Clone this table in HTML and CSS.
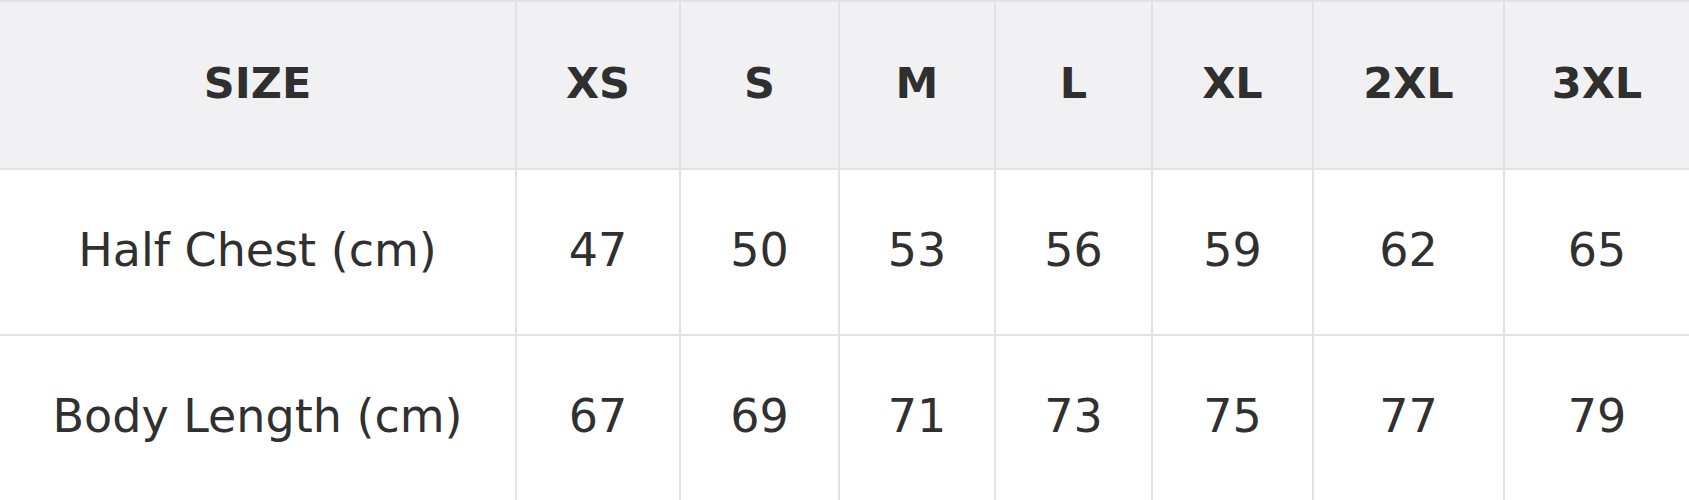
FILE: index.html
```html
<!DOCTYPE html>
<html lang="en">
<head>
<meta charset="utf-8">
<title>Size chart</title>
<link rel="stylesheet" href="styles.css">
</head>
<body>
<table class="size-chart">
  <colgroup>
    <col class="col-label">
    <col class="col-xs">
    <col class="col-s">
    <col class="col-m">
    <col class="col-l">
    <col class="col-xl">
    <col class="col-2xl">
    <col class="col-3xl">
  </colgroup>
  <thead>
    <tr class="head-row">
      <th>SIZE</th>
      <th>XS</th>
      <th>S</th>
      <th>M</th>
      <th>L</th>
      <th>XL</th>
      <th>2XL</th>
      <th>3XL</th>
    </tr>
  </thead>
  <tbody>
    <tr class="row-1">
      <td>Half Chest (cm)</td>
      <td>47</td>
      <td>50</td>
      <td>53</td>
      <td>56</td>
      <td>59</td>
      <td>62</td>
      <td>65</td>
    </tr>
    <tr class="row-2">
      <td>Body Length (cm)</td>
      <td>67</td>
      <td>69</td>
      <td>71</td>
      <td>73</td>
      <td>75</td>
      <td>77</td>
      <td>79</td>
    </tr>
  </tbody>
</table>
</body>
</html>
```
FILE: styles.css
```css
html, body {
  margin: 0;
  padding: 0;
  background: #ffffff;
}

.size-chart {
  width: 1689px;
  table-layout: fixed;
  border-collapse: collapse;
  font-family: "DejaVu Sans", "Liberation Sans", sans-serif;
  font-size: 46px;
  color: #303030;
  border-top: 2px solid #e2e2e2;
}

.col-label { width: 516px; }
.col-xs { width: 164px; }
.col-s { width: 159px; }
.col-m { width: 156px; }
.col-l { width: 157px; }
.col-xl { width: 161px; }
.col-2xl { width: 191px; }
.col-3xl { width: 185px; }

.size-chart th,
.size-chart td {
  padding: 0 0 4px 0;
  text-align: center;
  vertical-align: middle;
  border-left: 2px solid #e2e2e2;
  border-bottom: 2px solid #e2e2e2;
  line-height: 1;
}

.size-chart th:first-child,
.size-chart td:first-child {
  border-left: none;
}

.size-chart th {
  font-size: 43px;
  font-weight: 700;
  background: #f1f1f3;
  color: #2f2f2f;
}

.size-chart td {
  font-weight: 400;
}

.head-row { height: 168px; }
.row-1 { height: 166px; }
.row-2 { height: 166px; }
```
